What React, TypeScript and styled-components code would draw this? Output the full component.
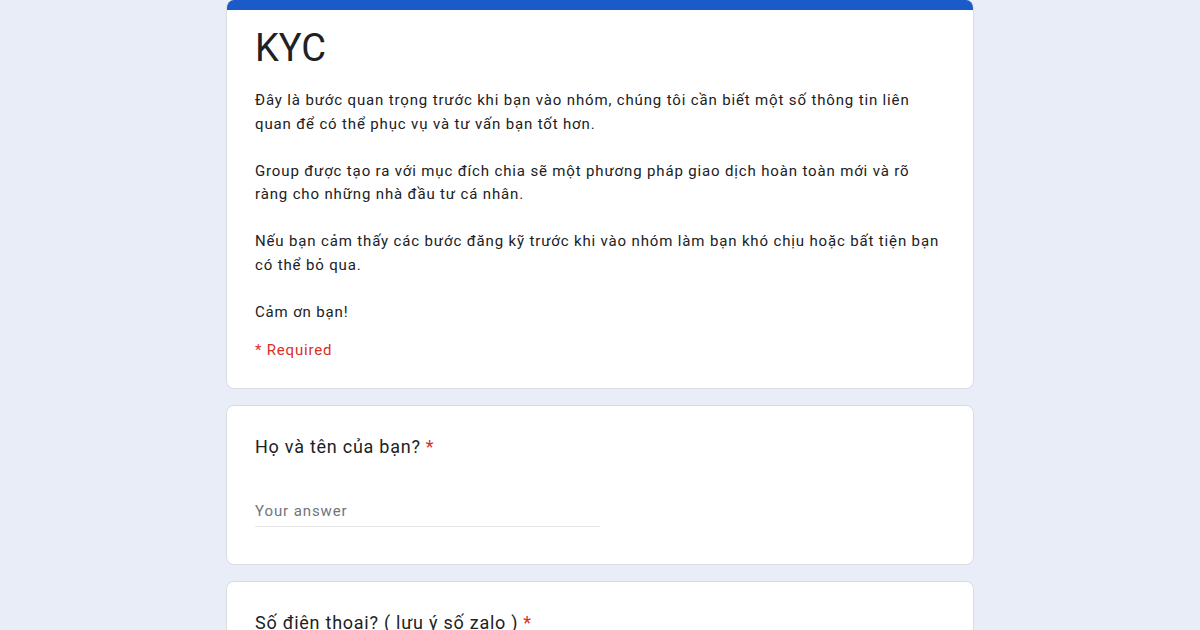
import styled, { createGlobalStyle } from 'styled-components'

const GlobalStyle = createGlobalStyle`
  html, body {
    margin: 0;
    padding: 0;
    background: #e8edf8;
  }
  body {
    font-family: Roboto, "Noto Sans", Arial, sans-serif;
    color: #202124;
  }
  * {
    box-sizing: border-box;
  }
`

//#region styles
const Page = styled.div`
  min-height: 100vh;
  background: #e8edf8;
  overflow: hidden;
`
const Column = styled.div`
  width: 748px;
  margin: 0 auto;
  display: flex;
  flex-direction: column;
  gap: 16px;
`
const Card = styled.div<{ $top?: boolean }>`
  background: #fff;
  border: 1px solid #dadce0;
  border-radius: 8px;
  overflow: hidden;
  padding: 0 28px;
  ${p => p.$top ? 'border-top: none;' : ''}
`
const TopBar = styled.div`
  height: 10px;
  margin: 0 -29px;
  background: #1a5bc9;
`
const Title = styled.h1`
  margin: 14px 0 0;
  font-size: 38px;
  line-height: 48px;
  font-weight: 400;
  color: #202124;
`
const Description = styled.div`
  margin-top: 17px;
  font-size: 15px;
  line-height: 23.5px;
  letter-spacing: 0.85px;
  white-space: pre-wrap;
  color: #202124;
`
const Required = styled.div`
  margin: 15px 0 27px;
  font-size: 15px;
  line-height: 22px;
  letter-spacing: 0.8px;
  color: #d93025;
`
const QuestionBody = styled.div`
  padding: 29px 0 37px;
`
const Question = styled.div`
  font-size: 18px;
  line-height: 24px;
  letter-spacing: 0.75px;
  color: #202124;
`
const Star = styled.span`
  color: #d93025;
  margin-left: 5px;
`
const AnswerInput = styled.input`
  display: block;
  width: 50%;
  margin-top: 41px;
  padding: 0 0 3px;
  border: none;
  border-bottom: 1px solid #e6e6e6;
  outline: none;
  background: transparent;
  font-family: Roboto, "Noto Sans", Arial, sans-serif;
  font-size: 15px;
  line-height: 23px;
  letter-spacing: 0.9px;
  color: #202124;
  &::placeholder {
    color: #70757a;
  }
`
//#endregion

const description = `Đây là bước quan trọng trước khi bạn vào nhóm, chúng tôi cần biết một số thông tin liên quan để có thể phục vụ và tư vấn bạn tốt hơn.

Group được tạo ra với mục đích chia sẽ một phương pháp giao dịch hoàn toàn mới và rõ ràng cho những nhà đầu tư cá nhân.

Nếu bạn cảm thấy các bước đăng kỹ trước khi vào nhóm làm bạn khó chịu hoặc bất tiện bạn có thể bỏ qua.

Cảm ơn bạn!`

const questions = ['Họ và tên của bạn?', 'Số điện thoại? ( lưu ý số zalo )']

export default function App() {
  return (
    <Page>
      <GlobalStyle />
      <Column>
        <Card $top>
          <TopBar />
          <Title>KYC</Title>
          <Description>{description}</Description>
          <Required>* Required</Required>
        </Card>
        {
          questions.map(q => (
            <Card key={q}>
              <QuestionBody>
                <Question>
                  {q}
                  <Star>*</Star>
                </Question>
                <AnswerInput placeholder='Your answer' />
              </QuestionBody>
            </Card>
          ))
        }
      </Column>
    </Page>
  )
}
